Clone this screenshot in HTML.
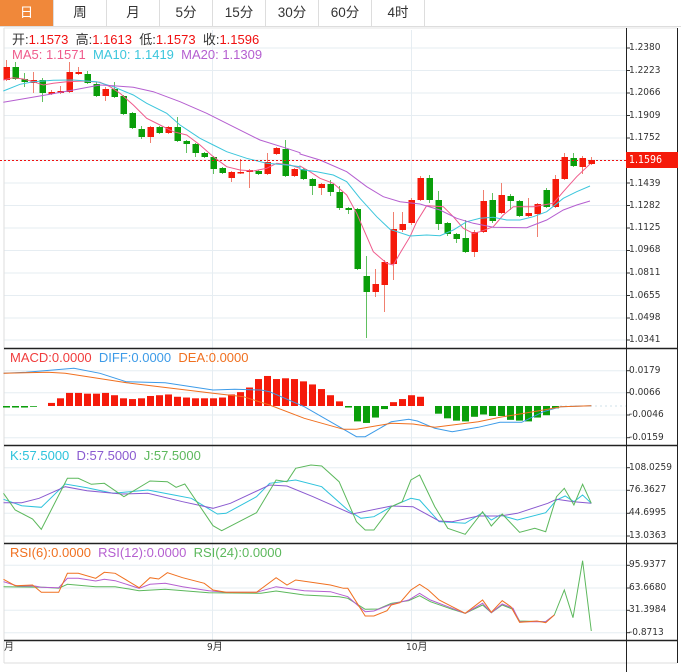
<!DOCTYPE html>
<html><head><meta charset="utf-8"><style>
*{margin:0;padding:0;box-sizing:border-box}
body{width:681px;height:672px;background:#fff;position:relative;overflow:hidden;font-family:"Liberation Sans","Noto Sans CJK SC",sans-serif;}
.tabs{position:absolute;left:0;top:0;width:681px;height:27px;border-bottom:1px solid #ddd;}
.tab{position:absolute;top:0;height:26px;width:53px;text-align:center;line-height:26px;font-size:13.5px;color:#333;border-right:1px solid #ddd;}
.tab.on{background:#f0883a;color:#fff}
.t{position:absolute;font-size:13px;white-space:nowrap;line-height:14px}
.ax{position:absolute;left:629px;font-size:10px;color:#333;line-height:12px;font-family:"DejaVu Sans Condensed","Liberation Sans",sans-serif}
svg{position:absolute;left:0;top:0}
</style></head><body>
<div class="tabs">
<div class="tab on" style="left:0;width:54px">日</div>
<div class="tab" style="left:54px">周</div>
<div class="tab" style="left:107px">月</div>
<div class="tab" style="left:160px">5分</div>
<div class="tab" style="left:213px">15分</div>
<div class="tab" style="left:266px">30分</div>
<div class="tab" style="left:319px">60分</div>
<div class="tab" style="left:372px">4时</div>
</div>
<svg id="s" width="681" height="672"></svg>
<div class="t" style="left:12px;top:33px;color:#333">开:<span style="color:#f01010">1.1573</span>&nbsp; 高:<span style="color:#f01010">1.1613</span>&nbsp; 低:<span style="color:#f01010">1.1573</span>&nbsp; 收:<span style="color:#f01010">1.1596</span></div>
<div class="t" style="left:12px;top:48px"><span style="color:#ef5b8c">MA5: 1.1571</span>&nbsp;&nbsp;<span style="color:#3cc6dc">MA10: 1.1419</span>&nbsp;&nbsp;<span style="color:#b55fd0">MA20: 1.1309</span></div>
<div class="t" style="left:10px;top:351px"><span style="color:#f03c3c">MACD:0.0000</span>&nbsp;&nbsp;<span style="color:#3d9be8">DIFF:0.0000</span>&nbsp;&nbsp;<span style="color:#f07020">DEA:0.0000</span></div>
<div class="t" style="left:10px;top:449px"><span style="color:#2ec3dc">K:57.5000</span>&nbsp;&nbsp;<span style="color:#8a5ad0">D:57.5000</span>&nbsp;&nbsp;<span style="color:#5cb85c">J:57.5000</span></div>
<div class="t" style="left:10px;top:546px"><span style="color:#f07020">RSI(6):0.0000</span>&nbsp;&nbsp;<span style="color:#b55fd0">RSI(12):0.0000</span>&nbsp;&nbsp;<span style="color:#5cb85c">RSI(24):0.0000</span></div>
<div class="ax" style="top:42px">1.2380</div><div class="ax" style="top:65px">1.2223</div><div class="ax" style="top:87px">1.2066</div><div class="ax" style="top:110px">1.1909</div><div class="ax" style="top:132px">1.1752</div>
<div class="ax" style="top:178px">1.1439</div><div class="ax" style="top:200px">1.1282</div><div class="ax" style="top:222px">1.1125</div><div class="ax" style="top:244px">1.0968</div><div class="ax" style="top:267px">1.0811</div><div class="ax" style="top:290px">1.0655</div><div class="ax" style="top:312px">1.0498</div><div class="ax" style="top:334px">1.0341</div>
<div style="position:absolute;left:626px;top:152px;width:52px;height:16px;background:#f51a0a;color:#fff;font-size:10.5px;line-height:16px;padding-left:3px;font-family:'DejaVu Sans Condensed',sans-serif">1.1596</div>
<div class="ax" style="top:365px">0.0179</div><div class="ax" style="top:387px">0.0066</div><div class="ax" style="top:409px">-0.0046</div><div class="ax" style="top:432px">-0.0159</div>
<div class="ax" style="top:462px">108.0259</div><div class="ax" style="top:484px">76.3627</div><div class="ax" style="top:507px">44.6995</div><div class="ax" style="top:530px">13.0363</div>
<div class="ax" style="top:559px">95.9377</div><div class="ax" style="top:582px">63.6680</div><div class="ax" style="top:604px">31.3984</div><div class="ax" style="top:627px">-0.8713</div>
<div class="ax" style="left:4px;top:642px">月</div><div class="ax" style="left:207px;top:642px">9月</div><div class="ax" style="left:406px;top:642px">10月</div>
<script>
const s=document.getElementById('s');let h='';
const L=(x1,y1,x2,y2,c,w,d)=>{h+=`<line x1="${x1}" y1="${y1}" x2="${x2}" y2="${y2}" stroke="${c}" stroke-width="${w||1}" ${d?'stroke-dasharray="'+d+'"':''}/>`;};
const P=(pts,c,w)=>{h+=`<polyline fill="none" stroke="${c}" stroke-width="${w||1}" points="${pts.map(p=>p[0].toFixed(1)+','+p[1].toFixed(1)).join(' ')}"/>`;};
const G='#e6edf2';
[48,70.5,93,115.5,138,160,183,205.5,228,250.5,273,295.5,318,340].forEach(y=>{L(4,y,626,y,G);L(626,y,630,y,'#333');});
[370.7,392.7,415,437.7,467.7,490.3,513.3,536,565.3,588,610.3,632.7].forEach(y=>{L(4,y,626,y,G);L(626,y,630,y,'#333');});
L(212.5,30,212.5,640,G);L(411.5,30,411.5,640,G);
L(4,28,4,663,'#ddd');L(4,663,677,663,'#ddd');L(4,28,677,28,'#e6e6e6');
const C=[[80,67,60,81],[67,79,62,80],[79,82,73,87],[83,80,72,93],[80,93,78,102],[94,92,90,95],[93,91,86,94],[92,72,62,93],[74,72,67,75],[74,83,71,84],[84,96,82,97],[96,89,87,101],[89,97,82,98],[96,114,95,115],[113,128,112,129],[129,137,126,139],[137,127,126,143],[127,133,126,134],[133,127,126,134],[127,141,117,142],[141,144,140,153],[144,153,143,157],[153,157,152,158],[157,169,156,174],[168,173,167,174],[178,172,171,182],[173,172,159,174],[172,170,169,188],[171,174,170,175],[174,162,153,175],[154,148,147,155],[149,176,140,177],[176,169,168,177],[169,179,168,180],[179,186,178,195],[188,184,183,195],[184,192,180,196],[192,208,186,210],[208,210,207,214],[209,269,208,270],[276,292,256,338],[292,284,269,297],[285,262,260,312],[264,229,212,280],[230,224,212,232],[223,200,198,225],[200,178,176,201],[178,200,175,203],[200,224,191,230],[223,234,222,236],[234,239,233,243],[238,252,220,253],[252,232,230,257],[232,201,190,233],[200,221,193,223],[213,195,183,214],[196,201,194,210],[201,216,200,217],[216,213,198,217],[214,204,203,237],[190,207,188,208],[207,179,175,208],[179,157,153,180],[158,166,153,167],[167,158,156,174],[164,160,157,165]];
const R='#f51a0a',GR='#0a9e0a';
C.forEach((k,i)=>{const x=6+9*i,up=k[1]<k[0],c=up?R:GR;L(x+0.5,k[2],x+0.5,k[3],up?'#f08070':'#60c060');const t=Math.min(k[0],k[1]),b=Math.max(k[0],k[1]);h+=`<rect x="${x-2.5}" y="${t}" width="6.5" height="${Math.max(1.5,b-t)}" fill="${c}"/>`;});
const z4=a=>a.map((v,i)=>i%2?null:[a[i]/3,55+a[i+1]/3]).filter(Boolean),z5=a=>a.map((v,i)=>i%2?null:[300+a[i]/3,140+a[i+1]/3]).filter(Boolean);
P(z4([10,75,40,68,70,72,100,80,130,90,160,85,200,80,250,78,300,82,330,95,360,115,400,150,440,190,480,210,520,230,560,240,600,270,640,305,680,335,720,345,760,348,800,340,830,325,870,330,900,340]).concat(z5([0,78,30,95,60,115,100,130,140,165,170,220,220,335,260,370,280,375,300,340,330,290,350,245,380,197,430,200,460,230,490,265,520,280,540,275,580,260,610,225,640,200,680,200,700,200,730,195,760,190,790,155,830,110,870,72])),'#ef5b8c');
P(z4([10,108,60,88,100,80,160,76,220,75,290,80,340,95,400,120,440,145,500,175,540,210,600,250,640,270,680,290,740,310,800,325,860,330,900,335]).concat(z5([0,88,50,95,100,105,140,125,180,175,230,230,270,268,330,288,380,285,420,287,460,270,500,245,540,235,580,232,620,240,660,240,700,230,740,215,790,175,830,155,870,138])),'#3cc6dc');
P(z4([10,142,80,130,150,118,220,105,300,90,340,92,400,97,460,110,540,140,620,175,700,215,780,255,860,280,900,293]).concat(z5([0,42,60,60,140,95,200,140,250,170,300,185,360,192,420,210,470,235,520,250,580,262,680,263,740,240,790,210,830,195,870,183])),'#b55fd0');
L(0,160.5,626,160.5,'#f01010',1,'2,2');
const Z=406,B=[-2,-2,-2,-1,0,4,10,17,17,16,16,17,14,10,9,10,13,14,15,12,11,10,10,10,11,15,18,24,35,39,35,36,35,32,28,22,14,6,-2,-20,-22,-15,-4,5,9,14,12,0,-10,-16,-19,-20,-14,-11,-13,-13,-18,-19,-20,-15,-12,-3,0];
B.forEach((v,i)=>{if(!v)return;const x=6+9*i,hh=v*0.77;h+=`<rect x="${x-3}" y="${hh>0?Z-hh:Z}" width="7" height="${Math.abs(hh)}" fill="${hh>0?R:GR}"/>`;});
L(560,406,626,406,'#cfe0ea',1,'2,3');
const z3=a=>a.map((v,i)=>i%2?null:[a[i]/2.3,340+a[i+1]/3]).filter(Boolean);
P(z3([8,100,60,97,170,85,230,100,290,125,380,128,490,150,540,148,600,150,620,155,700,200,780,260,820,290,840,290,900,245,940,238,960,243,1000,265,1040,275,1100,262,1150,247,1200,247,1250,215,1290,200,1360,197]),'#3d9be8');
P(z3([8,100,110,97,150,100,300,130,490,160,560,170,620,195,700,235,790,268,820,268,900,250,950,252,1000,262,1100,245,1150,232,1250,210,1290,200,1360,197]),'#f07020');
P(z3([8,478,50,497,95,502,150,432,200,443,260,460,340,450,400,465,440,475,500,522,520,520,590,470,620,430,680,420,740,440,800,510,830,535,860,530,900,500,945,475,965,480,1010,545,1070,550,1110,518,1130,540,1150,525,1190,540,1255,518,1280,480,1300,468,1320,485,1340,465,1360,490]),'#2ec3dc');
P(z3([8,488,50,488,90,475,150,440,200,452,280,462,340,460,420,485,490,505,530,490,620,435,660,438,720,470,810,522,900,498,950,500,1010,543,1040,545,1100,528,1150,528,1190,520,1260,490,1280,478,1320,485,1360,490]),'#8a5ad0');
P(z3([8,460,35,510,75,537,95,568,155,415,180,415,210,433,240,430,285,470,345,423,385,425,405,442,425,432,490,557,510,572,590,518,635,420,660,425,680,385,715,375,740,378,780,425,820,545,840,570,860,570,900,500,925,485,945,420,965,405,1000,500,1030,565,1070,583,1110,515,1130,558,1155,522,1195,577,1230,565,1255,575,1280,470,1298,445,1320,495,1340,433,1360,490]),'#5cb85c');
P(z3([8,740,100,742,135,745,155,733,220,740,265,740,320,752,380,748,480,758,600,760,635,753,700,765,780,770,800,775,840,808,870,807,900,790,940,782,965,767,990,785,1040,808,1070,820,1110,795,1130,818,1155,795,1180,808,1195,843,1255,845,1275,825,1298,750,1318,833,1340,662,1360,873]),'#5cb85c');
P(z3([8,725,40,738,80,738,95,742,135,743,155,715,180,715,220,723,240,718,265,722,320,745,345,733,380,730,420,740,480,752,520,757,590,757,635,740,700,752,760,755,800,770,840,815,860,813,900,793,940,780,965,760,990,780,1040,805,1070,820,1110,790,1130,818,1155,792,1180,805,1195,845,1255,845,1275,825]),'#b55fd0');
P(z3([8,718,35,737,75,735,95,757,135,757,155,700,180,700,220,715,240,697,265,700,320,743,345,713,365,717,385,698,420,713,470,730,490,750,520,757,590,757,635,713,660,735,680,720,760,735,790,745,800,745,840,828,860,828,890,812,900,795,920,788,945,750,965,733,985,750,1010,780,1040,800,1070,820,1090,800,1110,780,1130,817,1155,782,1175,800,1195,847,1235,843,1255,848,1275,825]),'#f07020');
[348,445,543,640].forEach(y=>L(4,y+0.5,678,y+0.5,'#222',1.5));
L(626.5,28,626.5,672,'#222');L(677.5,28,677.5,663,'#222');
s.innerHTML=h;
</script>
</body></html>
